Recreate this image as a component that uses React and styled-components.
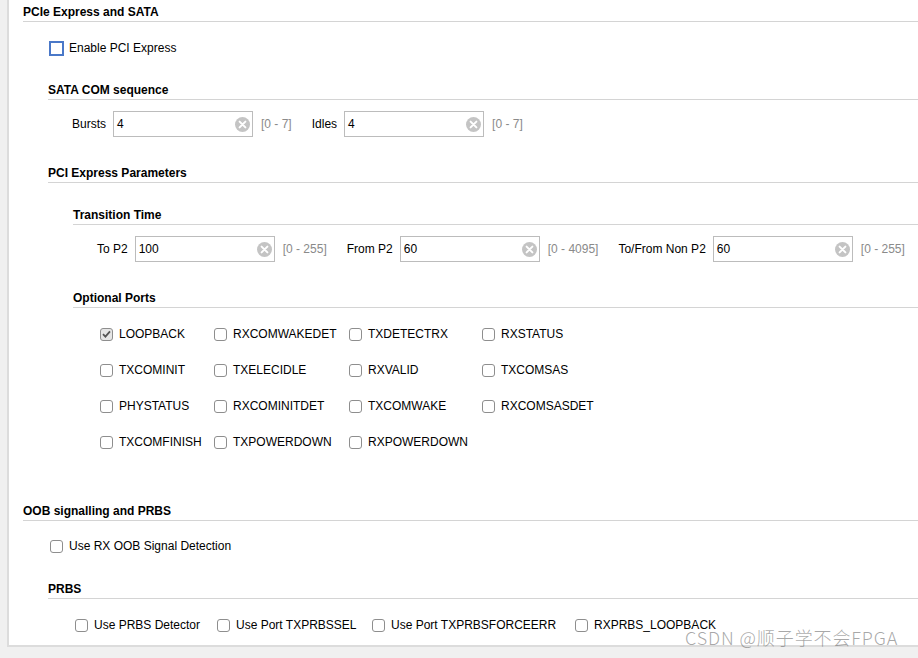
import React from "react";
import styled, { createGlobalStyle } from "styled-components";

const Global = createGlobalStyle`
  html, body { margin: 0; padding: 0; background: #f0f0f0; }
  body { font-family: "Liberation Sans", Arial, sans-serif; font-size: 12px; color: #000; }
`;

const Root = styled.div`
  position: relative;
  width: 918px;
  height: 658px;
  overflow: hidden;
  background: #f0f0f0;
`;

const Panel = styled.div`
  margin-left: 7px;
  border-left: 2px solid #dcdcdc;
  border-bottom: 2px solid #dcdcdc;
  background: #fff;
  padding: 5px 0 12px 14px;
  display: flex;
  flex-direction: column;
`;

const Section = styled.div`
  display: flex;
  flex-direction: column;
  margin-top: ${(p) => p.$top || 0}px;
`;

const Heading = styled.div`
  font-weight: bold;
  font-size: 12px;
  line-height: 14px;
  padding-bottom: 2px;
  border-bottom: 1px solid #d4d4d4;
  white-space: nowrap;
`;

const Body = styled.div`
  display: flex;
  flex-direction: column;
  padding-left: ${(p) => p.$indent}px;
`;

const CheckRow = styled.label`
  display: flex;
  align-items: center;
  height: 16px;
  margin-top: ${(p) => p.$top || 0}px;
  white-space: nowrap;
`;

const Box = styled.span`
  box-sizing: border-box;
  flex: none;
  display: inline-flex;
  align-items: center;
  justify-content: center;
  width: ${(p) => (p.$focused ? 15 : 13)}px;
  height: ${(p) => (p.$focused ? 15 : 13)}px;
  margin: ${(p) => (p.$focused ? "0 5px 0 1px" : "0 6px 0 2px")};
  border: ${(p) => (p.$focused ? "2px solid #4a78c8" : "1px solid #8e8e8e")};
  border-radius: ${(p) => (p.$focused ? 0 : 3)}px;
  background: ${(p) => (p.$checked ? "#e6e6e6" : "#fff")};
`;

const CheckText = styled.span`
  font-size: 12px;
  line-height: 16px;
`;

const Check = ({ label, checked, focused, top }) => (
  <CheckRow $top={top}>
    <Box $checked={checked} $focused={focused}>
      {checked && (
        <svg width="9" height="8" viewBox="0 0 9 8">
          <path d="M1 4.2 L3.4 6.6 L8 1.4" fill="none" stroke="#555" strokeWidth="1.8" />
        </svg>
      )}
    </Box>
    <CheckText>{label}</CheckText>
  </CheckRow>
);

const FieldRow = styled.div`
  display: flex;
  align-items: center;
  gap: 20px;
  margin-top: ${(p) => p.$top || 0}px;
`;

const Field = styled.div`
  display: flex;
  align-items: center;
  white-space: nowrap;
`;

const FieldLabel = styled.span`
  margin-right: 7px;
`;

const InputBox = styled.div`
  box-sizing: border-box;
  width: 140px;
  height: 26px;
  border: 1px solid #bcbcbc;
  display: flex;
  align-items: center;
  justify-content: space-between;
  padding: 0 2px 0 3px;
  background: #fff;
`;

const InputText = styled.span`
  font-size: 12px;
`;

const Range = styled.span`
  margin-left: 8px;
  color: #8a8a8a;
`;

const ClearIcon = () => (
  <svg width="15" height="15" viewBox="0 0 15 15">
    <circle cx="7.5" cy="7.5" r="7.5" fill="#c4c4c4" />
    <path d="M4.6 4.6 L10.4 10.4 M10.4 4.6 L4.6 10.4" stroke="#fff" strokeWidth="2" strokeLinecap="round" />
  </svg>
);

const NumField = ({ label, value, range }) => (
  <Field>
    <FieldLabel>{label}</FieldLabel>
    <InputBox>
      <InputText>{value}</InputText>
      <ClearIcon />
    </InputBox>
    <Range>{range}</Range>
  </Field>
);

const PortGrid = styled.div`
  display: grid;
  grid-template-columns: ${(p) => p.$cols};
  row-gap: 20px;
  margin-top: ${(p) => p.$top || 0}px;
`;

const Watermark = styled.div`
  position: absolute;
  left: 685px;
  top: 627px;
  font-family: "Noto Sans CJK SC", "Noto Sans", sans-serif;
  font-size: 18px;
  line-height: 20px;
  font-weight: 300;
  letter-spacing: 0.9px;
  color: rgba(110, 110, 110, 0.6);
  white-space: nowrap;
  pointer-events: none;
`;

const ports = [
  ["LOOPBACK", true], ["RXCOMWAKEDET"], ["TXDETECTRX"], ["RXSTATUS"],
  ["TXCOMINIT"], ["TXELECIDLE"], ["RXVALID"], ["TXCOMSAS"],
  ["PHYSTATUS"], ["RXCOMINITDET"], ["TXCOMWAKE"], ["RXCOMSASDET"],
  ["TXCOMFINISH"], ["TXPOWERDOWN"], ["RXPOWERDOWN"],
];

export default function App() {
  return (
    <Root>
      <Global />
      <Panel>
        <Section>
          <Heading>PCIe Express and SATA</Heading>
          <Body $indent={25}>
            <Check label="Enable PCI Express" focused top={18} />
            <Section $top={27}>
              <Heading>SATA COM sequence</Heading>
              <Body $indent={24}>
                <FieldRow $top={11}>
                  <NumField label="Bursts" value="4" range="[0 - 7]" />
                  <NumField label="Idles" value="4" range="[0 - 7]" />
                </FieldRow>
              </Body>
            </Section>
            <Section $top={29}>
              <Heading>PCI Express Parameters</Heading>
              <Body $indent={25}>
                <Section $top={25}>
                  <Heading>Transition Time</Heading>
                  <Body $indent={24}>
                    <FieldRow $top={11}>
                      <NumField label="To P2" value="100" range="[0 - 255]" />
                      <NumField label="From P2" value="60" range="[0 - 4095]" />
                      <NumField label="To/From Non P2" value="60" range="[0 - 255]" />
                    </FieldRow>
                  </Body>
                </Section>
                <Section $top={29}>
                  <Heading>Optional Ports</Heading>
                  <Body $indent={25}>
                    <PortGrid $cols="114px 135px 133px 1fr" $top={18}>
                      {ports.map(([name, on]) => (
                        <Check key={name} label={name} checked={!!on} />
                      ))}
                    </PortGrid>
                  </Body>
                </Section>
              </Body>
            </Section>
          </Body>
        </Section>
        <Section $top={54}>
          <Heading>OOB signalling and PRBS</Heading>
          <Body $indent={25}>
            <Check label="Use RX OOB Signal Detection" top={17} />
            <Section $top={28}>
              <Heading>PRBS</Heading>
              <Body $indent={25}>
                <PortGrid $cols="142px 155px 203px 1fr" $top={18}>
                  <Check label="Use PRBS Detector" />
                  <Check label="Use Port TXPRBSSEL" />
                  <Check label="Use Port TXPRBSFORCEERR" />
                  <Check label="RXPRBS_LOOPBACK" />
                </PortGrid>
              </Body>
            </Section>
          </Body>
        </Section>
      </Panel>
      <Watermark>CSDN @顺子学不会FPGA</Watermark>
    </Root>
  );
}
